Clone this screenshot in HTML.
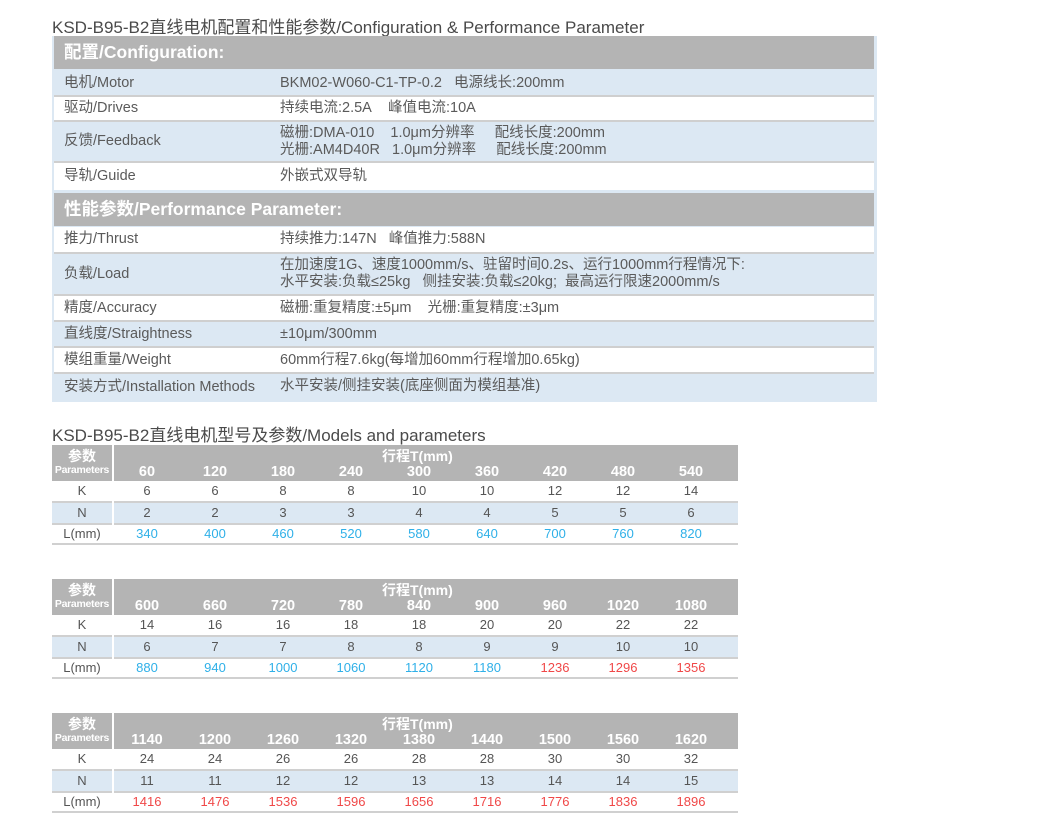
<!DOCTYPE html>
<html><head><meta charset="utf-8"><style>
*{margin:0;padding:0;box-sizing:border-box}
body{width:1061px;height:817px;background:#fff;font-family:"Liberation Sans","Noto Sans CJK SC",sans-serif;color:#555;position:relative;overflow:hidden}
.ab{position:absolute}
.t{font-size:17px;color:#4a4a4a;white-space:nowrap}
.big{left:52px;top:36px;width:825px;height:366px;background:#dce8f3}
.r{position:absolute;left:2px;right:3px;font-size:14.5px;color:#5a5a5a;white-space:nowrap}
.r .l{position:absolute;left:10px}
.r .v{position:absolute;left:226px;line-height:17px}
.h{background:#b4b4b4;color:#fff;font-weight:bold;font-size:17.5px}
.w{background:#fff}
.b{background:#dce8f3}
.sep{position:absolute;left:2px;right:3px;height:2px;background:#cfcfcf}
.st{position:absolute;left:52px;width:686px;font-size:13px}
.st .hd{position:absolute;left:0;top:0;width:686px;height:36px;background:#b4b4b4;color:#fff;font-weight:bold}
.st .p1{position:absolute;left:0;width:60px;text-align:center;white-space:nowrap}
.st .vl{position:absolute;left:60px;width:2px;background:#fff}
.st .row{position:absolute;left:0;width:686px;height:20px;line-height:20px}
.st .c{position:absolute;width:68px;text-align:center;top:0}
.st .ln{position:absolute;left:0;width:686px;height:2px;background:#d0d0d0}
.bl{color:#2fb0e8}.rd{color:#f04848}
</style></head><body>
<div class="ab t" style="left:52px;top:13px">KSD-B95-B2直线电机配置和性能参数/Configuration &amp; Performance Parameter</div>
<div class="ab big">
<div class="r h" style="top:0;height:33px;line-height:33px"><span class="l">配置/Configuration:</span></div>
<div class="r b" style="top:34px;height:26px;line-height:26px"><span class="l">电机/Motor</span><span class="v" style="top:5px">BKM02-W060-C1-TP-0.2&nbsp;&nbsp;&nbsp;电源线长:200mm</span></div>
<div class="sep" style="top:59px"></div>
<div class="r w" style="top:61px;height:23px;line-height:23px"><span class="l">驱动/Drives</span><span class="v" style="top:3px">持续电流:2.5A&nbsp;&nbsp;&nbsp;&nbsp;峰值电流:10A</span></div>
<div class="sep" style="top:84px"></div>
<div class="r b" style="top:86px;height:39px;line-height:39px"><span class="l">反馈/Feedback</span><span class="v" style="top:3px">磁栅:DMA-010&nbsp;&nbsp;&nbsp;&nbsp;1.0μm分辨率&nbsp;&nbsp;&nbsp;&nbsp;&nbsp;配线长度:200mm<br>光栅:AM4D40R&nbsp;&nbsp;&nbsp;1.0μm分辨率&nbsp;&nbsp;&nbsp;&nbsp;&nbsp;配线长度:200mm</span></div>
<div class="sep" style="top:125px"></div>
<div class="r w" style="top:127px;height:27px;line-height:27px"><span class="l">导轨/Guide</span><span class="v" style="top:5px">外嵌式双导轨</span></div>
<div class="r h" style="top:157px;height:33px;line-height:33px"><span class="l">性能参数/Performance Parameter:</span></div>
<div class="r w" style="top:191px;height:25px;line-height:25px"><span class="l">推力/Thrust</span><span class="v" style="top:4px">持续推力:147N&nbsp;&nbsp;&nbsp;峰值推力:588N</span></div>
<div class="sep" style="top:216px"></div>
<div class="r b" style="top:218px;height:40px;line-height:40px"><span class="l">负载/Load</span><span class="v" style="top:3px">在加速度1G、速度1000mm/s、驻留时间0.2s、运行1000mm行程情况下:<br>水平安装:负载≤25kg&nbsp;&nbsp;&nbsp;侧挂安装:负载≤20kg;&nbsp;&nbsp;最高运行限速2000mm/s</span></div>
<div class="sep" style="top:258px"></div>
<div class="r w" style="top:260px;height:24px;line-height:24px"><span class="l">精度/Accuracy</span><span class="v" style="top:4px">磁栅:重复精度:±5μm&nbsp;&nbsp;&nbsp;&nbsp;光栅:重复精度:±3μm</span></div>
<div class="sep" style="top:284px"></div>
<div class="r b" style="top:286px;height:24px;line-height:24px"><span class="l">直线度/Straightness</span><span class="v" style="top:4px">±10μm/300mm</span></div>
<div class="sep" style="top:310px"></div>
<div class="r w" style="top:312px;height:24px;line-height:24px"><span class="l">模组重量/Weight</span><span class="v" style="top:4px">60mm行程7.6kg(每增加60mm行程增加0.65kg)</span></div>
<div class="sep" style="top:336px"></div>
<div class="r b" style="top:338px;height:26px;line-height:26px"><span class="l">安装方式/Installation Methods</span><span class="v" style="top:4px">水平安装/侧挂安装(底座侧面为模组基准)</span></div>
</div>
<div class="ab t" style="left:52px;top:421px">KSD-B95-B2直线电机型号及参数/Models and parameters</div>

<!-- table 1 -->
<div class="st" style="top:445px;height:100px">
<div class="hd"><div class="p1" style="top:1px;font-size:14px">参数</div><div class="p1" style="top:19px;font-size:10.5px;letter-spacing:-0.3px">Parameters</div><div class="vl" style="top:0;height:36px"></div>
<div class="ab" style="left:330px;top:3px;font-size:14px;line-height:16px;white-space:nowrap">行程T(mm)</div>
<div class="ab" style="left:61px;top:19px;width:625px;font-size:14.5px;line-height:16px;height:16px"><span class="c" style="left:0">60</span><span class="c" style="left:68px">120</span><span class="c" style="left:136px">180</span><span class="c" style="left:204px">240</span><span class="c" style="left:272px">300</span><span class="c" style="left:340px">360</span><span class="c" style="left:408px">420</span><span class="c" style="left:476px">480</span><span class="c" style="left:544px">540</span></div></div>
<div class="row" style="top:36px;background:#fff"><span class="p1">K</span><span class="ab" style="left:61px;top:0;width:625px"><span class="c" style="left:0">6</span><span class="c" style="left:68px">6</span><span class="c" style="left:136px">8</span><span class="c" style="left:204px">8</span><span class="c" style="left:272px">10</span><span class="c" style="left:340px">10</span><span class="c" style="left:408px">12</span><span class="c" style="left:476px">12</span><span class="c" style="left:544px">14</span></span></div>
<div class="ln" style="top:56px"></div>
<div class="row" style="top:58px;background:#dce8f3"><span class="p1">N</span><span class="ab" style="left:61px;top:0;width:625px"><span class="c" style="left:0">2</span><span class="c" style="left:68px">2</span><span class="c" style="left:136px">3</span><span class="c" style="left:204px">3</span><span class="c" style="left:272px">4</span><span class="c" style="left:340px">4</span><span class="c" style="left:408px">5</span><span class="c" style="left:476px">5</span><span class="c" style="left:544px">6</span></span></div>
<div class="ln" style="top:78px"></div>
<div class="row" style="top:80px;height:18px;line-height:18px;background:#fff"><span class="p1">L(mm)</span><span class="ab bl" style="left:61px;top:0;width:625px"><span class="c" style="left:0">340</span><span class="c" style="left:68px">400</span><span class="c" style="left:136px">460</span><span class="c" style="left:204px">520</span><span class="c" style="left:272px">580</span><span class="c" style="left:340px">640</span><span class="c" style="left:408px">700</span><span class="c" style="left:476px">760</span><span class="c" style="left:544px">820</span></span></div>
<div class="ln" style="top:98px"></div>
<div class="vl" style="top:36px;height:62px"></div>
</div>

<!-- table 2 -->
<div class="st" style="top:579px;height:100px">
<div class="hd"><div class="p1" style="top:1px;font-size:14px">参数</div><div class="p1" style="top:19px;font-size:10.5px;letter-spacing:-0.3px">Parameters</div><div class="vl" style="top:0;height:36px"></div>
<div class="ab" style="left:330px;top:3px;font-size:14px;line-height:16px;white-space:nowrap">行程T(mm)</div>
<div class="ab" style="left:61px;top:19px;width:625px;font-size:14.5px;line-height:16px;height:16px"><span class="c" style="left:0">600</span><span class="c" style="left:68px">660</span><span class="c" style="left:136px">720</span><span class="c" style="left:204px">780</span><span class="c" style="left:272px">840</span><span class="c" style="left:340px">900</span><span class="c" style="left:408px">960</span><span class="c" style="left:476px">1020</span><span class="c" style="left:544px">1080</span></div></div>
<div class="row" style="top:36px;background:#fff"><span class="p1">K</span><span class="ab" style="left:61px;top:0;width:625px"><span class="c" style="left:0">14</span><span class="c" style="left:68px">16</span><span class="c" style="left:136px">16</span><span class="c" style="left:204px">18</span><span class="c" style="left:272px">18</span><span class="c" style="left:340px">20</span><span class="c" style="left:408px">20</span><span class="c" style="left:476px">22</span><span class="c" style="left:544px">22</span></span></div>
<div class="ln" style="top:56px"></div>
<div class="row" style="top:58px;background:#dce8f3"><span class="p1">N</span><span class="ab" style="left:61px;top:0;width:625px"><span class="c" style="left:0">6</span><span class="c" style="left:68px">7</span><span class="c" style="left:136px">7</span><span class="c" style="left:204px">8</span><span class="c" style="left:272px">8</span><span class="c" style="left:340px">9</span><span class="c" style="left:408px">9</span><span class="c" style="left:476px">10</span><span class="c" style="left:544px">10</span></span></div>
<div class="ln" style="top:78px"></div>
<div class="row" style="top:80px;height:18px;line-height:18px;background:#fff"><span class="p1">L(mm)</span><span class="ab" style="left:61px;top:0;width:625px"><span class="c bl" style="left:0">880</span><span class="c bl" style="left:68px">940</span><span class="c bl" style="left:136px">1000</span><span class="c bl" style="left:204px">1060</span><span class="c bl" style="left:272px">1120</span><span class="c bl" style="left:340px">1180</span><span class="c rd" style="left:408px">1236</span><span class="c rd" style="left:476px">1296</span><span class="c rd" style="left:544px">1356</span></span></div>
<div class="ln" style="top:98px"></div>
<div class="vl" style="top:36px;height:62px"></div>
</div>

<!-- table 3 -->
<div class="st" style="top:713px;height:100px">
<div class="hd"><div class="p1" style="top:1px;font-size:14px">参数</div><div class="p1" style="top:19px;font-size:10.5px;letter-spacing:-0.3px">Parameters</div><div class="vl" style="top:0;height:36px"></div>
<div class="ab" style="left:330px;top:3px;font-size:14px;line-height:16px;white-space:nowrap">行程T(mm)</div>
<div class="ab" style="left:61px;top:19px;width:625px;font-size:14.5px;line-height:16px;height:16px"><span class="c" style="left:0">1140</span><span class="c" style="left:68px">1200</span><span class="c" style="left:136px">1260</span><span class="c" style="left:204px">1320</span><span class="c" style="left:272px">1380</span><span class="c" style="left:340px">1440</span><span class="c" style="left:408px">1500</span><span class="c" style="left:476px">1560</span><span class="c" style="left:544px">1620</span></div></div>
<div class="row" style="top:36px;background:#fff"><span class="p1">K</span><span class="ab" style="left:61px;top:0;width:625px"><span class="c" style="left:0">24</span><span class="c" style="left:68px">24</span><span class="c" style="left:136px">26</span><span class="c" style="left:204px">26</span><span class="c" style="left:272px">28</span><span class="c" style="left:340px">28</span><span class="c" style="left:408px">30</span><span class="c" style="left:476px">30</span><span class="c" style="left:544px">32</span></span></div>
<div class="ln" style="top:56px"></div>
<div class="row" style="top:58px;background:#dce8f3"><span class="p1">N</span><span class="ab" style="left:61px;top:0;width:625px"><span class="c" style="left:0">11</span><span class="c" style="left:68px">11</span><span class="c" style="left:136px">12</span><span class="c" style="left:204px">12</span><span class="c" style="left:272px">13</span><span class="c" style="left:340px">13</span><span class="c" style="left:408px">14</span><span class="c" style="left:476px">14</span><span class="c" style="left:544px">15</span></span></div>
<div class="ln" style="top:78px"></div>
<div class="row" style="top:80px;height:18px;line-height:18px;background:#fff"><span class="p1">L(mm)</span><span class="ab rd" style="left:61px;top:0;width:625px"><span class="c" style="left:0">1416</span><span class="c" style="left:68px">1476</span><span class="c" style="left:136px">1536</span><span class="c" style="left:204px">1596</span><span class="c" style="left:272px">1656</span><span class="c" style="left:340px">1716</span><span class="c" style="left:408px">1776</span><span class="c" style="left:476px">1836</span><span class="c" style="left:544px">1896</span></span></div>
<div class="ln" style="top:98px"></div>
<div class="vl" style="top:36px;height:62px"></div>
</div>
</body></html>
